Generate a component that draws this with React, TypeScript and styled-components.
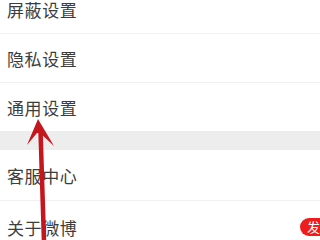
import React from "react";
import styled, { createGlobalStyle } from "styled-components";

const Global = createGlobalStyle`
  html, body { margin: 0; padding: 0; background: #ffffff; overflow: hidden; }
  body { font-family: "Noto Sans CJK SC", "Noto Sans", sans-serif; }
`;

const Page = styled.div`
  position: relative;
  width: 320px;
  height: 240px;
  overflow: hidden;
  background: #ffffff;
`;

const List = styled.div`
  display: flex;
  flex-direction: column;
  margin-top: -15px;
`;

const Row = styled.div<{ $h: number; $line?: boolean }>`
  height: ${(p) => p.$h}px;
  display: flex;
  align-items: center;
  justify-content: space-between;
  padding-left: 7px;
  border-bottom: ${(p) => (p.$line ? "1px solid #f1f1f1" : "none")};
  box-sizing: border-box;
`;

const Label = styled.span`
  font-size: 17px;
  color: #3d3d3d;
  letter-spacing: 0.6px;
  line-height: 1;
`;

const Band = styled.div`
  height: 19px;
  background: #ededed;
`;

const Badge = styled.span`
  height: 18px;
  padding: 0 6px 0 7px;
  margin-right: -58px;
  border-radius: 9px;
  background: #ee1c1c;
  color: #ffffff;
  font-size: 13px;
  line-height: 18px;
  white-space: nowrap;
`;

const Arrow = styled.svg`
  position: absolute;
  left: 0;
  top: 0;
  pointer-events: none;
`;

export default function App() {
  return (
    <>
      <Global />
      <Page>
        <List>
          <Row $h={49} $line>
            <Label>屏蔽设置</Label>
          </Row>
          <Row $h={49} $line>
            <Label>隐私设置</Label>
          </Row>
          <Row $h={48}>
            <Label>通用设置</Label>
          </Row>
          <Band />
          <Row $h={51} $line>
            <Label>客服中心</Label>
          </Row>
          <Row $h={52}>
            <Label>关于微博</Label>
            <Badge>发现新版本</Badge>
          </Row>
        </List>
        <Arrow width="320" height="240" viewBox="0 0 320 240">
          <path d="M40.5 130 L44 242" stroke="#c4161c" strokeWidth="4.5" fill="none" />
          <path d="M38 119 L54 146 L40 133 L37 133 L27 145 Z" fill="#c4161c" />
        </Arrow>
      </Page>
    </>
  );
}
